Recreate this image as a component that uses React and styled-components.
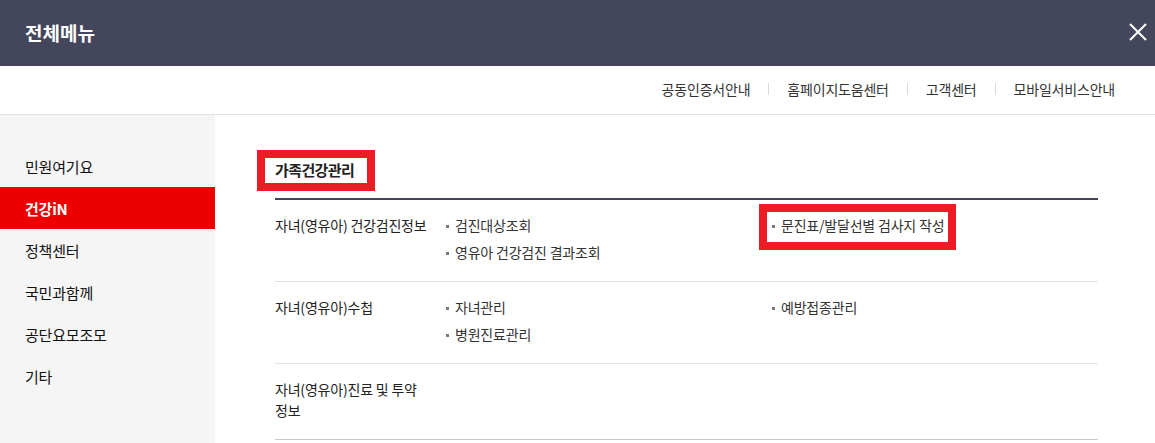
import React from "react";
import styled, { createGlobalStyle } from "styled-components";

const sideMenus = ["민원여기요", "건강iN", "정책센터", "국민과함께", "공단요모조모", "기타"];
const utilLinks = ["공동인증서안내", "홈페이지도움센터", "고객센터", "모바일서비스안내"];

const rows = [
  {
    label: "자녀(영유아) 건강검진정보",
    left: ["검진대상조회", "영유아 건강검진 결과조회"],
    right: [{ text: "문진표/발달선별 검사지 작성", marked: true }],
  },
  {
    label: "자녀(영유아)수첩",
    left: ["자녀관리", "병원진료관리"],
    right: [{ text: "예방접종관리" }],
  },
  {
    label: "자녀(영유아)진료 및 투약 정보",
    left: [],
    right: [],
  },
];

const App = () => {
  return (
    <Page>
      <GlobalStyle />
      <TopBar>
        <TopTitle>전체메뉴</TopTitle>
        <CloseButton aria-label="닫기">
          <svg width="18" height="18" viewBox="0 0 18 18">
            <path d="M1 1 L17 17 M17 1 L1 17" stroke="#fff" strokeWidth="2" fill="none" />
          </svg>
        </CloseButton>
      </TopBar>

      <UtilBar>
        {utilLinks.map((link, i) => (
          <React.Fragment key={link}>
            {i > 0 && <Divider />}
            <UtilLink>{link}</UtilLink>
          </React.Fragment>
        ))}
      </UtilBar>

      <Body>
        <Sidebar>
          {sideMenus.map((menu) => (
            <SideItem key={menu} active={menu === "건강iN"}>
              {menu}
            </SideItem>
          ))}
        </Sidebar>

        <Content>
          <SectionTitle>
            <Marked $box="title">가족건강관리</Marked>
          </SectionTitle>
          <Table>
            {rows.map((row) => (
              <Row key={row.label}>
                <Label>{row.label}</Label>
                <ItemList>
                  {row.left.map((item) => (
                    <Item key={item}>{item}</Item>
                  ))}
                </ItemList>
                <ItemList>
                  {row.right.map((item) => (
                    <Item key={item.text}>
                      {item.marked ? <Marked $box="item">{item.text}</Marked> : item.text}
                    </Item>
                  ))}
                </ItemList>
              </Row>
            ))}
          </Table>
        </Content>
      </Body>
    </Page>
  );
};

export default App;

const GlobalStyle = createGlobalStyle`
  html, body {
    margin: 0;
    padding: 0;
    background: #ffffff;
  }
  body {
    font-family: "Noto Sans CJK KR", "Noto Sans", sans-serif;
    color: #222;
  }
  * {
    box-sizing: border-box;
  }
`;

const Page = styled.div`
  width: 1155px;
  height: 443px;
  overflow: hidden;
  display: flex;
  flex-direction: column;
`;

const TopBar = styled.header`
  height: 66px;
  flex-shrink: 0;
  background: #44465b;
  display: flex;
  align-items: center;
  justify-content: space-between;
  padding: 0 7px 2px 25px;
`;

const TopTitle = styled.h1`
  margin: 0;
  font-size: 19px;
  font-weight: 700;
  letter-spacing: 0;
  color: #ffffff;
`;

const CloseButton = styled.button`
  width: 20px;
  height: 20px;
  padding: 0;
  border: none;
  background: none;
  display: flex;
  align-items: center;
  justify-content: center;
  cursor: pointer;
`;

const UtilBar = styled.nav`
  height: 49px;
  flex-shrink: 0;
  border-bottom: 1px solid #e2e2e2;
  display: flex;
  align-items: center;
  justify-content: flex-end;
  gap: 18px;
  padding: 0 40px 2px 0;
`;

const UtilLink = styled.a`
  font-size: 14px;
  letter-spacing: -0.2px;
  color: #333;
  cursor: pointer;
`;

const Divider = styled.span`
  width: 1px;
  height: 12px;
  background: #dadada;
`;

const Body = styled.div`
  flex: 1;
  display: flex;
`;

const Sidebar = styled.aside`
  width: 215px;
  flex-shrink: 0;
  background: #f5f5f5;
  padding-top: 30px;
`;

const SideItem = styled.div`
  height: 42px;
  display: flex;
  align-items: center;
  padding-left: 25px;
  font-size: 15px;
  letter-spacing: -0.2px;
  color: ${({ active }) => (active ? "#ffffff" : "#111")};
  font-weight: ${({ active }) => (active ? 700 : 400)};
  background: ${({ active }) => (active ? "#ee0000" : "transparent")};
  cursor: pointer;
`;

const Content = styled.main`
  flex: 1;
  padding: 43px 57px 0 60px;
`;

const SectionTitle = styled.h2`
  margin: 0 0 16px;
  font-size: 15px;
  line-height: 24px;
  font-weight: 700;
  letter-spacing: -0.6px;
  color: #222;
`;

/* red annotation frame drawn over the text */
const Marked = styled.span`
  position: relative;
  display: inline-block;

  &::after {
    content: "";
    position: absolute;
    border: 8px solid #ed1c24;
    pointer-events: none;
    ${({ $box }) =>
      $box === "title"
        ? "top: -8px; bottom: -9px; left: -18px; right: -21px;"
        : "top: -11px; bottom: -14px; left: -22px; right: -12px;"}
  }
`;

const Table = styled.div`
  border-top: 2px solid #44465b;
`;

const Row = styled.div`
  display: grid;
  grid-template-columns: 168px 326px 1fr;
  padding: 15px 0 18px;
  border-bottom: 1px solid #e3e3e3;

  &:last-child {
    border-bottom-color: #c8c8c8;
  }
`;

const Label = styled.div`
  max-width: 160px;
  font-size: 14px;
  line-height: 21px;
  letter-spacing: -0.2px;
  word-break: keep-all;
  color: #222;
`;

const ItemList = styled.ul`
  margin: 0;
  padding: 0;
  list-style: none;
  display: flex;
  flex-direction: column;
  gap: 6px;
`;

const Item = styled.li`
  position: relative;
  padding-left: 12px;
  font-size: 14px;
  line-height: 21px;
  letter-spacing: -0.2px;
  color: #333;

  &::before {
    content: "";
    position: absolute;
    left: 3px;
    top: 10px;
    width: 3px;
    height: 3px;
    background: #777;
  }
`;
